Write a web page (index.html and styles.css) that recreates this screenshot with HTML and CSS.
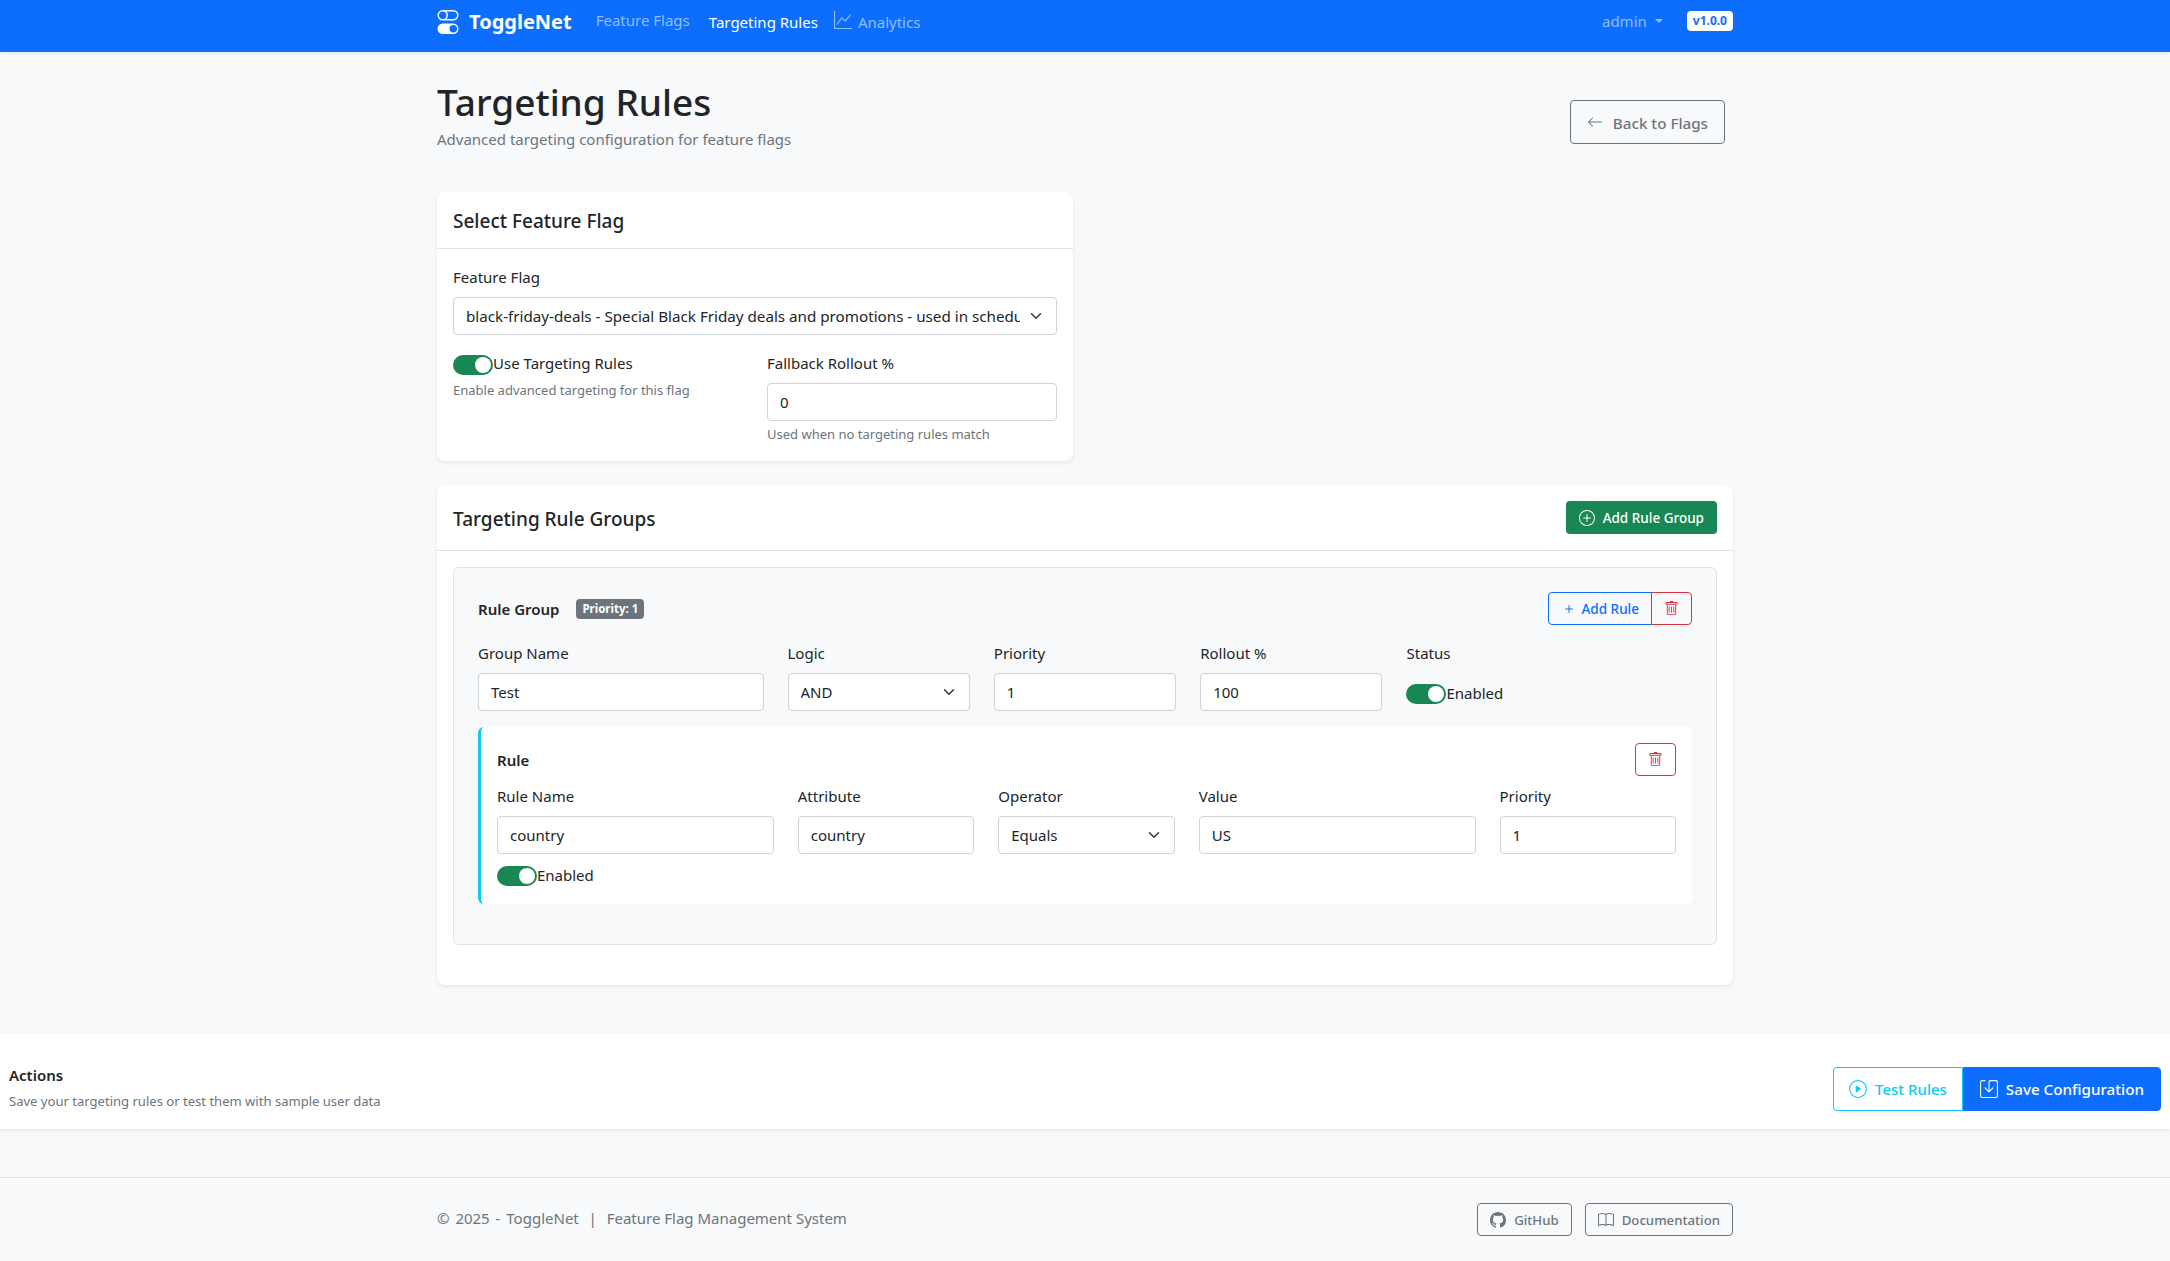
FILE: index.html
```html
<!DOCTYPE html>
<html lang="en">
<head>
<meta charset="utf-8">
<title>Targeting Rules - ToggleNet</title>
<link rel="stylesheet" href="styles.css">
</head>
<body>
<svg class="sprite" width="0" height="0" aria-hidden="true">
  <symbol id="i-toggles" viewBox="0 0 16 16"><path d="M4.5 9a3.5 3.5 0 1 0 0 7h7a3.5 3.5 0 1 0 0-7zm7 6a2.5 2.5 0 1 1 0-5 2.5 2.5 0 0 1 0 5m-7-14a2.5 2.5 0 1 0 0 5 2.5 2.5 0 0 0 0-5m2.45 0A3.5 3.5 0 0 1 8 3.5 3.5 3.5 0 0 1 6.95 6h4.55a2.5 2.5 0 0 0 0-5zM4.5 0h7a3.5 3.5 0 1 1 0 7h-7a3.5 3.5 0 1 1 0-7"/></symbol>
  <symbol id="i-graph" viewBox="0 0 16 16"><path fill-rule="evenodd" d="M0 0h1v15h15v1H0zm14.817 3.113a.5.5 0 0 1 .07.704l-4.5 5.5a.5.5 0 0 1-.74.037L7.06 6.767l-3.656 5.027a.5.5 0 0 1-.808-.588l4-5.5a.5.5 0 0 1 .758-.06l2.609 2.61 4.15-5.073a.5.5 0 0 1 .704-.07"/></symbol>
  <symbol id="i-left" viewBox="0 0 16 16"><path fill-rule="evenodd" d="M15 8a.5.5 0 0 0-.5-.5H2.707l3.147-3.146a.5.5 0 1 0-.708-.708l-4 4a.5.5 0 0 0 0 .708l4 4a.5.5 0 0 0 .708-.708L2.707 8.5H14.5A.5.5 0 0 0 15 8"/></symbol>
  <symbol id="i-plus-circle" viewBox="0 0 16 16"><path d="M8 15A7 7 0 1 1 8 1a7 7 0 0 1 0 14m0 1A8 8 0 1 0 8 0a8 8 0 0 0 0 16"/><path d="M8 4a.5.5 0 0 1 .5.5v3h3a.5.5 0 0 1 0 1h-3v3a.5.5 0 0 1-1 0v-3h-3a.5.5 0 0 1 0-1h3v-3A.5.5 0 0 1 8 4"/></symbol>
  <symbol id="i-plus" viewBox="0 0 16 16"><path d="M8 4a.5.5 0 0 1 .5.5v3h3a.5.5 0 0 1 0 1h-3v3a.5.5 0 0 1-1 0v-3h-3a.5.5 0 0 1 0-1h3v-3A.5.5 0 0 1 8 4"/></symbol>
  <symbol id="i-trash" viewBox="0 0 16 16"><path d="M5.5 5.5A.5.5 0 0 1 6 6v6a.5.5 0 0 1-1 0V6a.5.5 0 0 1 .5-.5m2.5 0a.5.5 0 0 1 .5.5v6a.5.5 0 0 1-1 0V6a.5.5 0 0 1 .5-.5m3 .5a.5.5 0 0 0-1 0v6a.5.5 0 0 0 1 0z"/><path d="M14.5 3a1 1 0 0 1-1 1H13v9a2 2 0 0 1-2 2H5a2 2 0 0 1-2-2V4h-.5a1 1 0 0 1-1-1V2a1 1 0 0 1 1-1H6a1 1 0 0 1 1-1h2a1 1 0 0 1 1 1h3.5a1 1 0 0 1 1 1zM4.118 4 4 4.059V13a1 1 0 0 0 1 1h6a1 1 0 0 0 1-1V4.059L11.882 4zM2.5 3h11V2h-11z"/></symbol>
  <symbol id="i-play" viewBox="0 0 16 16"><path d="M8 15A7 7 0 1 1 8 1a7 7 0 0 1 0 14m0 1A8 8 0 1 0 8 0a8 8 0 0 0 0 16"/><path d="M6.271 5.055a.5.5 0 0 1 .52.038l3.5 2.5a.5.5 0 0 1 0 .814l-3.5 2.5A.5.5 0 0 1 6 10.5v-5a.5.5 0 0 1 .271-.445"/></symbol>
  <symbol id="i-save" viewBox="0 0 16 16"><path d="M2 1a1 1 0 0 0-1 1v12a1 1 0 0 0 1 1h12a1 1 0 0 0 1-1V2a1 1 0 0 0-1-1H9.5a1 1 0 0 0-1 1v7.293l2.646-2.647a.5.5 0 0 1 .708.708l-3.5 3.5a.5.5 0 0 1-.708 0l-3.5-3.5a.5.5 0 1 1 .708-.708L7.5 9.293V2a2 2 0 0 1 2-2H14a2 2 0 0 1 2 2v12a2 2 0 0 1-2 2H2a2 2 0 0 1-2-2V2a2 2 0 0 1 2-2h2.5a.5.5 0 0 1 0 1z"/></symbol>
  <symbol id="i-github" viewBox="0 0 16 16"><path d="M8 0C3.58 0 0 3.58 0 8c0 3.54 2.29 6.53 5.47 7.59.4.07.55-.17.55-.38 0-.19-.01-.82-.01-1.49-2.01.37-2.53-.49-2.69-.94-.09-.23-.48-.94-.82-1.13-.28-.15-.68-.52-.01-.53.63-.01 1.08.58 1.23.82.72 1.21 1.87.87 2.33.66.07-.52.28-.87.51-1.07-1.78-.2-3.64-.89-3.64-3.95 0-.87.31-1.59.82-2.15-.08-.2-.36-1.02.08-2.12 0 0 .67-.21 2.2.82.64-.18 1.32-.27 2-.27s1.36.09 2 .27c1.53-1.04 2.2-.82 2.2-.82.44 1.1.16 1.92.08 2.12.51.56.82 1.27.82 2.15 0 3.07-1.87 3.75-3.65 3.95.29.25.54.73.54 1.48 0 1.07-.01 1.93-.01 2.2 0 .21.15.46.55.38A8.01 8.01 0 0 0 16 8c0-4.42-3.58-8-8-8"/></symbol>
  <symbol id="i-book" viewBox="0 0 16 16"><path d="M1 2.828c.885-.37 2.154-.769 3.388-.893 1.33-.134 2.458.063 3.112.752v9.746c-.935-.53-2.12-.603-3.213-.493-1.18.12-2.37.461-3.287.811zm7.5-.141c.654-.689 1.782-.886 3.112-.752 1.234.124 2.503.523 3.388.893v9.923c-.918-.35-2.107-.692-3.287-.81-1.094-.111-2.278-.039-3.213.492zM8 1.783C7.015.936 5.587.81 4.287.94c-1.514.153-3.042.672-3.994 1.105A.5.5 0 0 0 0 2.5v11a.5.5 0 0 0 .707.455c.882-.4 2.303-.881 3.68-1.02 1.409-.142 2.59.087 3.223.877a.5.5 0 0 0 .78 0c.633-.79 1.814-1.019 3.222-.877 1.378.139 2.8.62 3.681 1.02A.5.5 0 0 0 16 13.5v-11a.5.5 0 0 0-.293-.455c-.952-.433-2.48-.952-3.994-1.105C10.413.809 8.985.936 8 1.783"/></symbol>
</svg>

<nav class="navbar">
  <div class="container nav-inner">
    <a class="brand" href="#"><svg class="ic ic-brand"><use href="#i-toggles"/></svg>ToggleNet</a>
    <a class="nav-link nav-link-raised" href="#">Feature Flags</a>
    <a class="nav-link active" href="#">Targeting Rules</a>
    <a class="nav-link nav-analytics" href="#"><svg class="ic ic-graph"><use href="#i-graph"/></svg>Analytics</a>
    <div class="nav-right">
      <a class="nav-link nav-admin" href="#">admin<span class="caret"></span></a>
      <span class="version">v1.0.0</span>
    </div>
  </div>
</nav>

<main class="container">
  <header class="page-head">
    <div>
      <h1 class="page-title">Targeting Rules</h1>
      <p class="page-sub">Advanced targeting configuration for feature flags</p>
    </div>
    <a class="btn btn-back" href="#"><svg class="ic ic-16"><use href="#i-left"/></svg>Back to Flags</a>
  </header>

  <section class="card card-half">
    <div class="card-head card-head-plain"><h2 class="card-title">Select Feature Flag</h2></div>
    <div class="card-body">
      <div class="field-stack">
        <label class="label">Feature Flag</label>
        <select class="control select select-wide">
          <option>black-friday-deals - Special Black Friday deals and promotions - used in scheduling demos</option>
        </select>
      </div>
      <div class="two-col">
        <div>
          <div class="switch-row"><span class="switch"></span><span class="switch-label">Use Targeting Rules</span></div>
          <p class="help help-left">Enable advanced targeting for this flag</p>
        </div>
        <div>
          <label class="label">Fallback Rollout %</label>
          <input class="control" value="0">
          <p class="help">Used when no targeting rules match</p>
        </div>
      </div>
    </div>
  </section>

  <section class="card card-groups">
    <div class="card-head card-head-action">
      <h2 class="card-title">Targeting Rule Groups</h2>
      <a class="btn btn-sm btn-success" href="#"><svg class="ic ic-16"><use href="#i-plus-circle"/></svg>Add Rule Group</a>
    </div>
    <div class="card-body">
      <div class="group">
        <div class="group-head">
          <div class="group-title"><strong>Rule Group</strong><span class="badge">Priority: 1</span></div>
          <div class="btn-group">
            <a class="btn btn-sm btn-outline-primary" href="#"><svg class="ic ic-16"><use href="#i-plus"/></svg>Add Rule</a>
            <a class="btn btn-sm btn-outline-danger btn-joined" href="#"><svg class="ic ic-15"><use href="#i-trash"/></svg></a>
          </div>
        </div>
        <div class="grid12">
          <div class="c3"><label class="label">Group Name</label><input class="control" value="Test"></div>
          <div class="c2"><label class="label">Logic</label><select class="control select"><option>AND</option></select></div>
          <div class="c2"><label class="label">Priority</label><input class="control" value="1"></div>
          <div class="c2"><label class="label">Rollout %</label><input class="control" value="100"></div>
          <div class="c2"><label class="label">Status</label>
            <div class="switch-row switch-status"><span class="switch"></span><span class="switch-label">Enabled</span></div>
          </div>
        </div>
        <div class="rule">
          <div class="rule-head">
            <strong>Rule</strong>
            <a class="btn btn-sm btn-outline-danger btn-del" href="#"><svg class="ic ic-15"><use href="#i-trash"/></svg></a>
          </div>
          <div class="grid12">
            <div class="c3"><label class="label">Rule Name</label><input class="control" value="country"></div>
            <div class="c2"><label class="label">Attribute</label><input class="control" value="country"></div>
            <div class="c2"><label class="label">Operator</label><select class="control select"><option>Equals</option></select></div>
            <div class="c3"><label class="label">Value</label><input class="control" value="US"></div>
            <div class="c2"><label class="label">Priority</label><input class="control" value="1"></div>
          </div>
          <div class="switch-row switch-rule"><span class="switch"></span><span class="switch-label">Enabled</span></div>
        </div>
      </div>
    </div>
  </section>
</main>

<section class="actions">
  <div>
    <h3 class="actions-title">Actions</h3>
    <p class="actions-sub">Save your targeting rules or test them with sample user data</p>
  </div>
  <div class="btn-group">
    <a class="btn btn-test" href="#"><svg class="ic ic-18"><use href="#i-play"/></svg>Test Rules</a>
    <a class="btn btn-save" href="#"><svg class="ic ic-18"><use href="#i-save"/></svg>Save Configuration</a>
  </div>
</section>

<footer class="footer">
  <div class="container footer-inner">
    <span class="footer-text"><span class="footer-copy">© 2025 - ToggleNet</span> <span class="footer-sep">&nbsp;|&nbsp;</span> Feature Flag Management System</span>
    <div class="footer-links">
      <a class="btn btn-sm btn-outline-secondary" href="#"><svg class="ic ic-16"><use href="#i-github"/></svg>GitHub</a>
      <a class="btn btn-sm btn-outline-secondary" href="#"><svg class="ic ic-16"><use href="#i-book"/></svg>Documentation</a>
    </div>
  </div>
</footer>
</body>
</html>
```

FILE: styles.css
```css
* { box-sizing: border-box; }
html, body { margin: 0; padding: 0; }
body {
  background: #f8f9fa;
  color: #212529;
  font-family: "Noto Sans", "Open Sans", "Liberation Sans", sans-serif;
  font-size: 15px;
  line-height: 24px;
}
a { text-decoration: none; color: inherit; }
h1, h2, h3, p { margin: 0; }
.sprite { position: absolute; }
.ic { fill: currentColor; display: block; flex: none; }
.ic-15 { width: 15px; height: 15px; }
.ic-16 { width: 16px; height: 16px; }
.ic-18 { width: 18px; height: 18px; }
.container { width: 1320px; margin: 0 auto; padding: 0 12px; }

.navbar { background: #0d6efd; height: 52px; box-shadow: 0 1px 3px rgba(0,0,0,.1); }
.nav-inner { display: flex; align-items: center; height: 100%; padding-bottom: 8px; }
.brand { display: flex; align-items: center; gap: 9px; color: #fff; font-weight: 700; font-size: 20px; margin: 0 12px 0 -1px; }
.ic-brand { width: 24px; height: 24px; }
.nav-link { color: rgba(255,255,255,.55); font-size: 15px; margin-left: 10px; margin-right: 10px; display: flex; align-items: center; }
.nav-link-raised { position: relative; top: -2px; margin-left: 12px; margin-right: 9px; }
.nav-link.active { color: #fff; }
.nav-analytics { margin-left: 6px; gap: 6px; }
.ic-graph { width: 18px; height: 18px; margin-top: -4px; }
.nav-right { margin-left: auto; display: flex; align-items: center; }
.nav-admin { margin: 0 24px 0 0; position: relative; top: -1px; }
.caret { width: 0; height: 0; margin-left: 8px; border: 4px solid transparent; border-top-color: currentColor; border-bottom: 0; }
.version { background: #fff; color: #0d6efd; font-size: 12px; font-weight: 700; line-height: 20px; padding: 0 6px; border-radius: 4px; position: relative; top: -1px; }

.page-head { display: flex; justify-content: space-between; align-items: center; padding: 26px 8px 0 0; margin-bottom: 42px; }
.page-title { font-size: 37px; line-height: 48px; font-weight: 500; }
.page-sub { color: #6c757d; font-size: 15px; line-height: 24px; position: relative; top: 1px; }
.btn { display: inline-flex; align-items: center; justify-content: center; border: 1px solid transparent; border-radius: 4px; font-weight: 500; }
.btn-back { height: 44px; padding: 2px 16px 0; gap: 10px; color: #6c757d; border-color: #6c757d; font-size: 15.2px; margin-top: 16px; }
.btn-back .ic { margin-top: -2px; }
.btn-sm { height: 33px; font-size: 13.5px; padding: 0 12px; gap: 8px; }

.card { background: #fff; border-radius: 8px; box-shadow: 0 2px 4px rgba(0,0,0,.075); margin-bottom: 24px; }
.card-half { width: 636px; }
.card-head { border-bottom: 1px solid #dee2e6; display: flex; align-items: center; justify-content: space-between; padding: 0 16px; }
.card-head-plain { height: 57px; }
.card-head-action { height: 66px; }
.card-title { font-size: 19px; line-height: 24px; font-weight: 500; position: relative; top: 1px; }
.card-body { padding: 16px; }
.card-half .card-body { padding-bottom: 17px; }
.field-stack { margin-bottom: 16px; }
.two-col { display: grid; grid-template-columns: 1fr 1fr; gap: 24px; }
.label { display: block; font-size: 15px; line-height: 24px; margin-bottom: 8px; }
.control {
  display: block; width: 100%; height: 38px; padding: 0 12px; border: 1px solid #ced4da; border-radius: 4px;
  background: #fff; color: #212529; font: inherit; font-size: 15px; outline: none;
}
.select {
  appearance: none; padding-right: 36px;
  background: #fff url("data:image/svg+xml,%3csvg xmlns='http://www.w3.org/2000/svg' viewBox='0 0 16 16'%3e%3cpath fill='none' stroke='%23343a40' stroke-linecap='round' stroke-linejoin='round' stroke-width='2' d='m2 5 6 6 6-6'/%3e%3c/svg%3e") no-repeat right 12px center / 16px 12px;
}
.select-wide { font-size: 15.2px; }
.help { color: #6c757d; font-size: 13px; line-height: 19px; margin-top: 4px; }
.help-left { margin-top: 6px; }
.switch-row { display: flex; align-items: center; height: 24px; }
.switch { width: 40px; height: 20px; margin-top: 4px; border-radius: 10px; background: #198754; position: relative; flex: none; }
.switch::after { content: ""; position: absolute; top: 2px; right: 2px; width: 16px; height: 16px; border-radius: 50%; background: #fff; }
.switch-label { font-size: 15px; }
.switch-status { height: 38px; }
.switch-status .switch-label { position: relative; top: 1px; }
.switch-rule { margin-top: 10px; }
.switch-rule .switch { margin-top: 0; }
.switch-rule .switch-label { position: relative; top: -1px; }

.group { background: #f8f9fa; border: 1px solid #dee2e6; border-radius: 6px; padding: 24px; margin-bottom: 24px; }
.group-head { display: flex; justify-content: space-between; align-items: center; margin-bottom: 16px; }
.group-title { display: flex; align-items: center; gap: 17px; font-size: 15px; }
.group-title strong, .rule-head strong { font-weight: 600; }
.badge { background: #6c757d; color: #fff; font-size: 11.5px; font-weight: 700; line-height: 20px; padding: 0 6px; border-radius: 4px; }
.btn-group { display: flex; }
.btn-outline-primary { color: #0d6efd; border-color: #0d6efd; border-radius: 4px 0 0 4px; padding-left: 12px; gap: 5px; }
.btn-outline-danger { color: #dc3545; border-color: #dc3545; width: 41px; padding: 0; }
.btn-joined { border-radius: 0 4px 4px 0; margin-left: -1px; }
.btn-outline-secondary { color: #6c757d; border-color: #6c757d; font-size: 13.2px; padding-right: 12px; }
.btn-success { background: #198754; color: #fff; }
.grid12 { display: grid; grid-template-columns: repeat(12, 1fr); column-gap: 24px; }
.c2 { grid-column: span 2; min-width: 0; }
.c3 { grid-column: span 3; min-width: 0; }
.group > .grid12 { margin-bottom: 16px; }
.rule { background: #fff; border-left: 3px solid #0dcaf0; border-radius: 6px; padding: 16px; margin-bottom: 16px; }
.rule-head { display: flex; justify-content: space-between; align-items: center; font-size: 15px; margin-bottom: 8px; }

.actions { background: #fff; height: 96px; padding: 0 9px 18px; display: flex; justify-content: space-between; align-items: flex-end; box-shadow: 0 2px 4px rgba(0,0,0,.075); margin-top: 48px; }
.actions-title { font-size: 15px; line-height: 24px; font-weight: 600; }
.actions-sub { color: #6c757d; font-size: 13.05px; line-height: 20px; margin-top: 4px; }
.btn-test, .btn-save { height: 44px; font-size: 15.2px; gap: 8px; }
.btn-test { color: #0dcaf0; border-color: #0dcaf0; background: #fff; border-radius: 4px 0 0 4px; padding: 0 15px; font-size: 15px; }
.btn-save { background: #0d6efd; color: #fff; border-color: #0d6efd; border-radius: 0 4px 4px 0; padding: 0 16px; }

.footer { margin-top: 48px; border-top: 1px solid #dee2e6; height: 84px; }
.footer-inner { display: flex; justify-content: space-between; align-items: center; height: 100%; }
.footer-text { color: #6c757d; font-size: 15px; position: relative; top: -2px; }
.footer-copy { word-spacing: 2px; }
.footer-sep { margin: 0 2px; }
.footer-links { display: flex; gap: 13px; }
```
